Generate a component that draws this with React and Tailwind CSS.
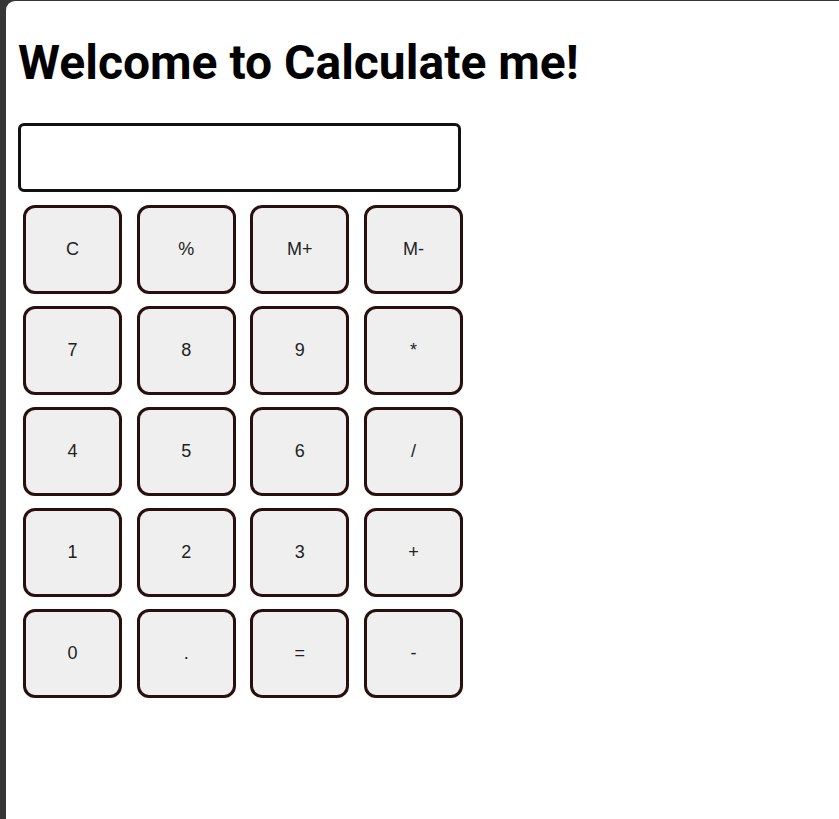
import React, { useState } from "react";

const keys = [
  "C", "%", "M+", "M-",
  "7", "8", "9", "*",
  "4", "5", "6", "/",
  "1", "2", "3", "+",
  "0", ".", "=", "-",
];

export default function App() {
  const [display, setDisplay] = useState("");

  const press = (k) => {
    if (k === "C") return setDisplay("");
    if (k === "=") {
      try {
        // eslint-disable-next-line no-new-func
        setDisplay(String(Function(`return (${display})`)()));
      } catch {
        setDisplay("Error");
      }
      return;
    }
    if (k === "M+" || k === "M-" || k === "%") return;
    setDisplay((d) => d + k);
  };

  return (
    <div className="min-h-[819px] bg-[#363636] pt-px pl-[6px]">
      <div className="min-h-[818px] bg-white rounded-tl-[9px] pl-[12px] pt-[34px]">
        <h1 className="font-['Roboto',sans-serif] font-bold text-[48px] leading-[56px] text-black">
          Welcome to Calculate me!
        </h1>
        <input
          value={display}
          readOnly
          className="mt-[32px] block w-[443px] h-[69px] border-[3px] border-[#111] rounded-[6px] px-3 text-[28px] font-['Liberation_Sans',sans-serif] outline-none"
        />
        <div className="mt-[13px] ml-[5px] grid grid-cols-[repeat(4,113.7px)] gap-y-[12px] w-[455px]">
          {keys.map((k) => (
            <button
              key={k}
              onClick={() => press(k)}
              className="w-[99px] h-[89px] bg-[#efefef] border-[3px] border-[#2a0f0f] rounded-[12px] text-[18px] text-[#222] font-['Liberation_Sans',Arial,sans-serif] flex items-center justify-center"
            >
              {k}
            </button>
          ))}
        </div>
      </div>
    </div>
  );
}
